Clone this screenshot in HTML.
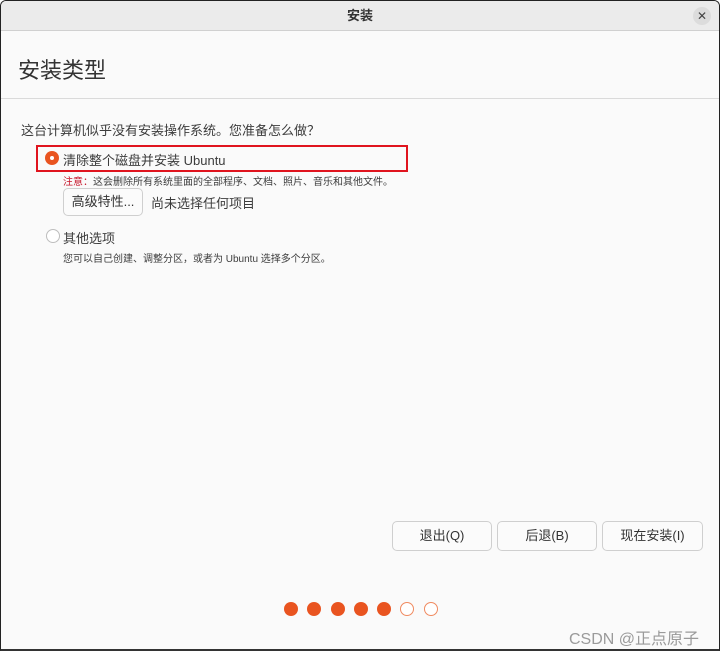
<!DOCTYPE html>
<html><head><meta charset="utf-8"><style>
*{margin:0;padding:0;box-sizing:border-box}
body{width:721px;height:653px;background:#fff;font-family:"Liberation Sans","Noto Sans CJK SC",sans-serif;color:#3c3c3c;position:relative;overflow:hidden}
.win{position:absolute;left:0;top:0;width:720px;height:651px;border:1px solid #222;border-bottom:2px solid #333;background:#fafafa;border-radius:6px 6px 0 0;overflow:hidden}
.tb{position:absolute;left:0;top:0;right:0;height:30px;background:#ebebeb;border-bottom:1px solid #d0d0d0;text-align:center;font-size:13px;font-weight:bold;line-height:30px;color:#333}
.x{position:absolute;right:8px;top:6px;width:18px;height:18px;border-radius:50%;background:#dcdcdc;font-size:12px;line-height:18px;text-align:center;color:#444;font-weight:normal}
.hd{position:absolute;left:0;top:31px;right:0;height:67px;border-bottom:1px solid #dadada;background:#fafafa}
.t{position:absolute;white-space:nowrap}
.radio{position:absolute;width:14px;height:14px;border-radius:50%}
.btn{position:absolute;border:1px solid #cfcfcf;border-radius:5px;background:#fbfbfb;text-align:center;font-size:13px;color:#333}
.dot{position:absolute;top:601px;width:14px;height:14px;border-radius:50%;background:#e95420}
.o{background:#fff;border:1.5px solid #f08a60}
</style></head><body>
<div class="win">
<div class="tb">安装<div class="x">✕</div></div>
<div class="hd"><div class="t" style="left:17px;top:21px;font-size:22px;color:#333">安装类型</div></div>
<div class="t" style="left:20px;top:119px;font-size:13px">这台计算机似乎没有安装操作系统。您准备怎么做？</div>
<div style="position:absolute;left:35px;top:144px;width:372px;height:27px;border:2px solid #e0141e"></div>
<div class="radio" style="left:44px;top:150px;background:#e95420"><div style="position:absolute;left:5px;top:5px;width:4px;height:4px;border-radius:50%;background:#fff"></div></div>
<div class="t" style="left:62px;top:149px;font-size:13px">清除整个磁盘并安装 Ubuntu</div>
<div class="t" style="left:62px;top:172px;font-size:10px"><span style="color:#c7162b">注意：</span>这会删除所有系统里面的全部程序、文档、照片、音乐和其他文件。</div>
<div class="btn" style="left:62px;top:187px;width:80px;height:28px;line-height:26px">高级特性...</div>
<div class="t" style="left:150px;top:192px;font-size:13px">尚未选择任何项目</div>
<div class="radio" style="left:45px;top:228px;border:1px solid #bdbdbd;background:#fff"></div>
<div class="t" style="left:62px;top:227px;font-size:13px">其他选项</div>
<div class="t" style="left:62px;top:249px;font-size:10px">您可以自己创建、调整分区，或者为 Ubuntu 选择多个分区。</div>
<div class="btn" style="left:391px;top:520px;width:100px;height:30px;line-height:28px">退出(Q)</div>
<div class="btn" style="left:496px;top:520px;width:100px;height:30px;line-height:28px">后退(B)</div>
<div class="btn" style="left:601px;top:520px;width:101px;height:30px;line-height:28px">现在安装(I)</div>
<div class="dot" style="left:283px"></div><div class="dot" style="left:306px"></div><div class="dot" style="left:330px"></div><div class="dot" style="left:353px"></div><div class="dot" style="left:376px"></div><div class="dot o" style="left:399px"></div><div class="dot o" style="left:423px"></div>
<div class="t" style="left:568px;top:624px;font-size:16px;color:#9a9a9a">CSDN @正点原子</div>
</div>
</body></html>
